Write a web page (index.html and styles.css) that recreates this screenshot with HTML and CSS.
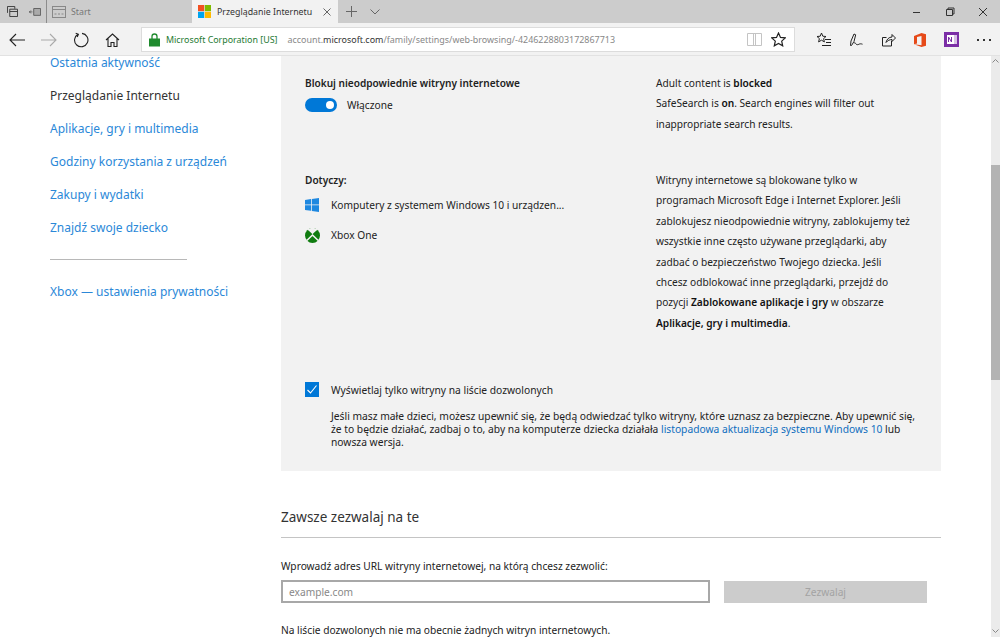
FILE: index.html
```html
<!DOCTYPE html>
<html lang="pl">
<head>
<meta charset="utf-8">
<title>Przeglądanie Internetu</title>
<link rel="stylesheet" href="styles.css">
</head>
<body>
<div class="tabbar">
  <div class="tab-tools">
    <svg class="ic" width="11" height="11" viewBox="0 0 12 12" fill="none" stroke="#333"><path d="M.500 7.500V.500h8v2.500M3 3.500h8.500v8H3zM3 6h8.500"/></svg>
    <svg class="ic" width="12" height="9" viewBox="0 0 14 10" fill="none" stroke="#555"><path d="M5.500 1.500h8v8h-8z" fill="#aaa"/><path d="M0 5.500h4M2.200 3.800L.500 5.500l1.700 1.700"/></svg>
  </div>
  <div class="tab tab-idle">
    <svg width="14" height="12" viewBox="0 0 14 12" fill="none" stroke="#888"><rect x=".5" y=".5" width="13" height="11"/><path d="M.5 3.500h13M2.500 8h2M6 8h2M9.500 8h2" /></svg>
    <span>Start</span>
  </div>
  <div class="tab tab-active">
    <svg class="mslogo" width="13" height="13" viewBox="0 0 13 13"><rect width="6.200" height="6.200" fill="#f25022"/><rect x="6.800" width="6.200" height="6.200" fill="#7fba00"/><rect y="6.800" width="6.200" height="6.200" fill="#00a4ef"/><rect x="6.800" y="6.800" width="6.200" height="6.200" fill="#ffb900"/></svg>
    <span class="tab-title">Przeglądanie Internetu</span>
    <svg width="8" height="8" viewBox="0 0 8 8" stroke="#666" fill="none"><path d="M.5 .5l7 7M7.500 .5l-7 7"/></svg>
  </div>
  <div class="tab-add">
    <svg width="11" height="11" viewBox="0 0 11 11" stroke="#666" fill="none"><path d="M5.500 0v11M0 5.500h11"/></svg>
    <svg width="10" height="6" viewBox="0 0 10 6" stroke="#666" fill="none"><path d="M.5 .5L5 5 9.500 .5"/></svg>
  </div>
  <div class="win-btns">
    <svg width="10" height="10" viewBox="0 0 10 10" stroke="#333" fill="none"><path d="M1 5.500h7"/></svg>
    <svg width="10" height="10" viewBox="0 0 10 10" stroke="#333" fill="none"><path d="M1.500 2.500h6v6h-6zM3 2.500V1h6v6H7.500"/></svg>
    <svg width="10" height="10" viewBox="0 0 10 10" stroke="#333" fill="none"><path d="M1 1l8 8M9 1l-8 8"/></svg>
  </div>
</div>

<div class="toolbar">
  <div class="nav">
    <svg width="16" height="14" viewBox="0 0 16 14" stroke="#222" fill="none" stroke-width="1.100"><path d="M16 7H1M7 1L1 7l6 6"/></svg>
    <svg width="16" height="14" viewBox="0 0 16 14" stroke="#aaa" fill="none" stroke-width="1.100"><path d="M0 7h15M9 1l6 6-6 6"/></svg>
    <svg width="16" height="16" viewBox="0 0 16 16" stroke="#222" fill="none" stroke-width="1.100"><path d="M5 2.200A6.700 6.700 0 1 0 9 1.400M2.700 1.200L5.400 2.300 4.200 5"/></svg>
    <svg width="15" height="14" viewBox="0 0 15 14" stroke="#222" fill="none" stroke-width="1.100"><path d="M1 7l6.500-6L14 7M3 5.500v8h3v-4h3v4h3v-8"/></svg>
  </div>
  <div class="address">
    <svg width="11" height="14" viewBox="0 0 11 14"><path d="M3 6V3.500a2.500 2.500 0 0 1 5 0V6" fill="none" stroke="#1f8a2e" stroke-width="1.300"/><rect y="5.500" width="11" height="8" fill="#1f8a2e"/></svg>
    <span class="cert">Microsoft Corporation [US]</span>
    <span class="url">account.<b>microsoft.com</b>/family/settings/web-browsing/-4246228803172867713</span>
    <svg class="reader" width="15" height="13" viewBox="0 0 15 13" stroke="#c4c4c4" fill="none"><path d="M.500.500h14v12H.500zM6.500.500v12M8.500.500v12"/></svg>
    <svg width="15" height="15" viewBox="0 0 15 15" stroke="#222" fill="none" stroke-width="1.200"><path d="M7.500 1l2 4.400 4.800.500-3.600 3.200 1 4.700-4.200-2.400-4.200 2.400 1-4.700L.700 5.900l4.800-.500z"/></svg>
  </div>
  <div class="tools">
    <svg width="15" height="15" viewBox="0 0 15 15" stroke="#222" fill="none"><path d="M5.500 1l1.300 3.200 3.200.300-2.400 2.100.8 3.300-2.900-1.700-2.900 1.700.8-3.300L1 4.500l3.200-.300zM9 7.500h6M10 10.500h5M6 13.500h9"/></svg>
    <svg width="14" height="15" viewBox="0 0 14 15" stroke="#222" fill="none"><path d="M1.500 13.500L2 9l3-7 1.700.8L5 9.500 2.500 13.500zM5 11c1-.500 1.500 0 2 1 .500 1 2 .800 3 .200 1-.500 2-.500 3.500 0"/></svg>
    <svg width="15" height="14" viewBox="0 0 15 14" stroke="#222" fill="none"><path d="M10.500 8v5h-9V4.500h4M5 9.500c.500-3 3-5.500 6-5.500V1.500L14.500 5 11 8.500V6.500C9 6.500 6.500 7.500 5 9.500z"/></svg>
    <svg width="12" height="14" viewBox="0 0 12 14"><path d="M0 3l7.500-3L12 1.200v11.600L7.500 14 0 11.200l7.500 1V3L3 4v6.500L0 11.200z" fill="#e64a19"/></svg>
    <svg width="15" height="15" viewBox="0 0 15 15"><rect width="15" height="15" fill="#7b2ea6"/><rect x="9" y="3" width="4" height="9" fill="#d9c2e6"/><rect x="3" y="3" width="7" height="9" fill="#fff"/><path d="M4.500 10V5l3 5V5" stroke="#7b2ea6" fill="none"/></svg>
    <div class="more"><i></i><i></i><i></i></div>
  </div>
</div>

<div class="page">
  <nav class="side">
    <a>Ostatnia aktywność</a>
    <span class="current">Przeglądanie Internetu</span>
    <a>Aplikacje, gry i multimedia</a>
    <a>Godziny korzystania z urządzeń</a>
    <a>Zakupy i wydatki</a>
    <a>Znajdź swoje dziecko</a>
    <hr class="side-rule">
    <a>Xbox — ustawienia prywatności</a>
  </nav>

  <main class="main">
    <section class="panel">
      <div class="cols top-cols">
        <div>
          <h3 class="label">Blokuj nieodpowiednie witryny internetowe</h3>
          <div class="switch-row"><span class="switch"><i></i></span><span>Włączone</span></div>
        </div>
        <div class="side-text">
          <p>Adult content is <b>blocked</b></p>
          <p>SafeSearch is <b>on</b>. Search engines will filter out inappropriate search results.</p>
        </div>
      </div>
      <div class="cols mid-cols">
        <div>
          <h3 class="label">Dotyczy:</h3>
          <div class="device">
            <svg width="14" height="14" viewBox="0 0 14 14" fill="#1e88e0"><path d="M0 2l6-.900V6.500H0zM6.800 1L14 0v6.500H6.800zM0 7.300h6v5.500l-6-.900zM6.800 7.300H14V14l-7.200-1z"/></svg>
            <span>Komputery z systemem Windows 10 i urządzen...</span>
          </div>
          <div class="device">
            <svg class="xbox-ic" width="15" height="15" viewBox="0 0 15 15"><circle cx="7.500" cy="7.500" r="7.500" fill="#107c10"/><path d="M2 1.800C4 2.600 6 4.500 7.500 6.300 9 4.500 11 2.600 13 1.800 11.500.500 9.500 0 7.500 0S3.500.500 2 1.800z" fill="#f2f2f2"/><path d="M1.800 12.500L7.500 7l5.700 5.500" stroke="#f2f2f2" stroke-width="1.600" fill="none"/></svg>
            <span>Xbox One</span>
          </div>
        </div>
        <div class="side-text">
          <p>Witryny internetowe są blokowane tylko w programach Microsoft Edge i Internet Explorer. Jeśli zablokujesz nieodpowiednie witryny, zablokujemy też wszystkie inne często używane przeglądarki, aby zadbać o bezpieczeństwo Twojego dziecka. Jeśli chcesz odblokować inne przeglądarki, przejdź do pozycji <b>Zablokowane aplikacje i gry</b> w obszarze <b>Aplikacje, gry i multimedia</b>.</p>
        </div>
      </div>
      <div class="allow-only">
        <span class="check"><svg width="10" height="9" viewBox="0 0 10 9" fill="none" stroke="#fff" stroke-width="1.100"><path d="M.500 5l3 3 6-7.500"/></svg></span>
        <div>
          <div class="allow-title">Wyświetlaj tylko witryny na liście dozwolonych</div>
          <p class="allow-text">Jeśli masz małe dzieci, możesz upewnić się, że będą odwiedzać tylko witryny, które uznasz za bezpieczne. Aby upewnić się, że to będzie działać, zadbaj o to, aby na komputerze dziecka działała <a>listopadowa aktualizacja systemu Windows 10</a> lub nowsza wersja.</p>
        </div>
      </div>
    </section>

    <section class="allow">
      <h2>Zawsze zezwalaj na te</h2>
      <label class="url-label">Wprowadź adres URL witryny internetowej, na którą chcesz zezwolić:</label>
      <div class="url-row">
        <div class="url-input">example.com</div>
        <div class="allow-btn">Zezwalaj</div>
      </div>
      <p class="empty">Na liście dozwolonych nie ma obecnie żadnych witryn internetowych.</p>
    </section>
  </main>

  <div class="scrollbar">
    <svg class="arrow" width="7" height="4" viewBox="0 0 7 4" fill="none" stroke="#888"><path d="M.500 3.500l3-3 3 3"/></svg>
    <div class="thumb"></div>
    <svg class="arrow arrow-down" width="7" height="4" viewBox="0 0 7 4" fill="none" stroke="#888"><path d="M.500.500l3 3 3-3"/></svg>
  </div>
</div>
</body>
</html>
```

FILE: styles.css
```css
* { box-sizing: border-box; }
html, body { margin: 0; height: 100%; overflow: hidden; }
body {
  width: 1000px; height: 637px;
  font-family: "Noto Sans", "Liberation Sans", sans-serif;
  font-size: 10.200px; color: #222; background: #fff;
  display: flex; flex-direction: column;
}
p { margin: 0; }
a { color: #106ebe; }

.tabbar { height: 23px; flex: none; background: #cccccc; display: flex; align-items: center; }
.tab-tools { width: 47px; height: 23px; display: flex; align-items: center; gap: 11px; padding-left: 7px; border-right: 1px solid #8c8c8c; }
.ic { flex: none; }
.tab { height: 23px; display: flex; align-items: center; }
.tab-idle { width: 145px; padding-left: 5px; gap: 5px; color: #777; font-size: 8.800px; }
.tab-active { width: 146px; padding: 0 7px 0 6px; background: #f2f2f2; color: #333; font-size: 8.800px; }
.mslogo { flex: none; }
.tab-title { margin-left: 6px; margin-right: auto; white-space: nowrap; }
.tab-add { display: flex; align-items: center; gap: 13px; padding-left: 8px; }
.win-btns { margin-left: auto; display: flex; gap: 23px; padding-right: 12px; align-items: center; }

.toolbar { height: 33px; flex: none; background: #f2f2f2; border-bottom: 1px solid #e2e2e2; display: flex; align-items: center; padding-top: 1px; }
.nav { width: 141px; display: flex; align-items: center; gap: 16px; padding-left: 9px; }
.address { width: 654px; height: 25px; background: #fff; border: 1px solid #dcdcdc; display: flex; align-items: center; padding: 0 8px 0 7px; }
.cert { color: #1e7a32; font-size: 8.900px; margin-left: 6px; white-space: nowrap; }
.url { color: #888; font-size: 8.950px; margin-left: 10px; white-space: nowrap; }
.url b { color: #333; font-weight: 400; }
.reader { margin-left: auto; margin-right: 9px; }
.tools { flex: 1; display: flex; align-items: center; justify-content: space-between; padding: 0 9px 0 21px; }
.more { display: flex; gap: 4px; }
.more i { width: 2px; height: 2px; background: #333; }

.page { flex: 1; min-height: 0; display: flex; overflow: hidden; }
.side { width: 281px; flex: none; padding: 0 0 0 50px; display: flex; flex-direction: column; align-items: flex-start; font-size: 12px; line-height: 33px; margin-top: -10px; }
.side a, .side span { white-space: nowrap; height: 33px; }
.side a { color: #2b88d8; }
.side .current { color: #333; }
.side-rule { width: 137px; border: 0; border-top: 1px solid #b8b8b8; margin: 15px 0 15px; }

.main { width: 660px; flex: none; }
.panel { background: #f2f2f2; height: 415px; padding: 19px 24px 0; display: flow-root; }
.cols { display: grid; grid-template-columns: 351px 258px; }
.top-cols { height: 97px; }
.mid-cols { height: 209px; }
.label { margin: 0; font-size: 10.080px; font-weight: 600; line-height: 16px; color: #222; }
.switch-row { display: flex; align-items: center; gap: 10px; margin-top: 7px; height: 14px; }
.switch { width: 32px; height: 14px; border-radius: 7px; background: #0078d7; display: flex; justify-content: flex-end; align-items: center; padding-right: 3px; }
.switch i { width: 8px; height: 8px; border-radius: 50%; background: #fff; }
.side-text { line-height: 20.400px; font-size: 10.170px; margin-top: -2px; }
.side-text b { font-weight: 600; color: #111; }
.device { display: flex; align-items: center; gap: 12px; height: 30px; }
.device:first-of-type { margin-top: 2px; }
.device svg { flex: none; }
.device .xbox-ic { margin-left: -0.5px; margin-right: -0.5px; }
.allow-only { display: flex; gap: 12px; margin-top: 0; }
.check { width: 14px; height: 15px; flex: none; background: #0078d7; display: flex; align-items: center; justify-content: center; margin-top: 1px; }
.allow-title { line-height: 18px; font-size: 10.270px; }
.allow-text { line-height: 13px; margin-top: 11px; font-size: 10.270px; }
.allow-text a { color: #106ebe; }

.allow { height: 166px; }
.allow h2 { margin: 0; padding-top: 34px; height: 67px; border-bottom: 1px solid #c4c4c4; font-size: 13.500px; font-weight: 400; line-height: 24px; color: #333; }
.url-label { display: block; margin-top: 20px; line-height: 16px; }
.url-row { display: flex; align-items: center; margin-top: 6px; }
.url-input { width: 429px; height: 23px; border: 2px solid #a8a8a8; padding-left: 6px; color: #888; line-height: 21px; }
.allow-btn { width: 203px; height: 22px; margin-left: 14px; background: #cccccc; color: #a3a3a3; text-align: center; line-height: 22px; }
.empty { margin-top: 19px; line-height: 16px; }

.scrollbar { width: 9px; margin-left: auto; flex: none; background: #ebebeb; display: flex; flex-direction: column; align-items: center; padding-top: 3px; }
.thumb { width: 9px; height: 215px; background: #b3b3b3; margin-top: 102px; }
.arrow { flex: none; }
.arrow-down { margin-top: auto; margin-bottom: 4px; }
```
